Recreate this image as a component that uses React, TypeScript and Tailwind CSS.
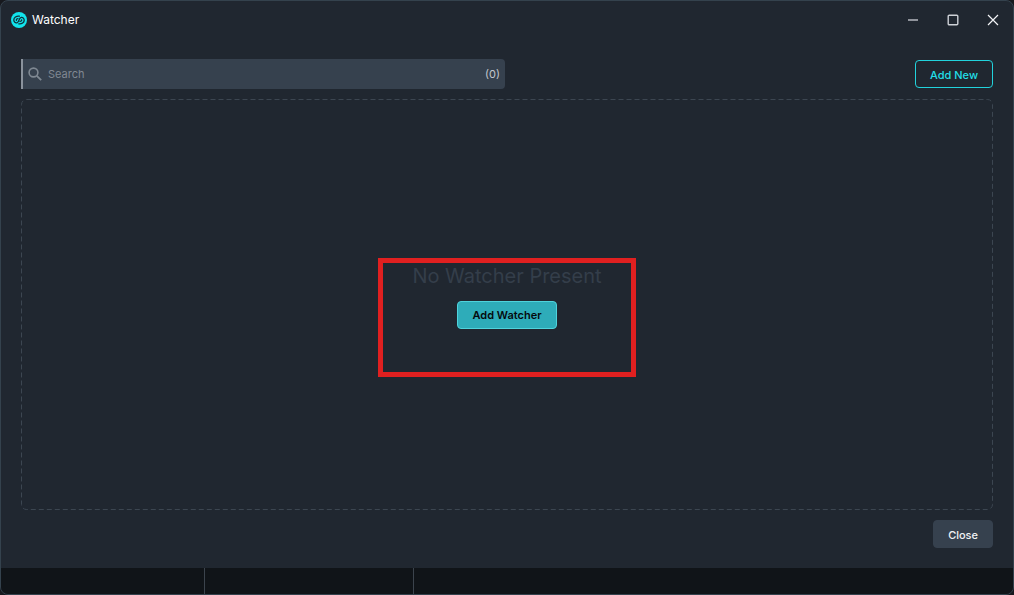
import { useState } from "react";

const STATUS_CELLS = ["w-[203px]", "w-52"];

function WatcherLogo() {
  return (
    <svg viewBox="0 0 16 16" className="size-4" aria-hidden="true">
      <circle cx="8" cy="8" r="8" fill="#12e4ec" />
      <g fill="none" stroke="#10303a" strokeWidth="1.3" strokeLinecap="round">
        <path d="M8.4 4.2C5.4 3.8 2.8 5.4 2.8 8C2.8 10 4.4 11.2 6 10.8C8.6 10.2 7.4 5.8 10.2 5.4C12 5.2 13.2 6.6 13.2 8.2C13.2 10.6 10.8 12.2 7.8 11.8" />
        <path d="M7 6.6C5.8 6.6 5.2 7.4 5.4 8.4M9 9.4C10.2 9.4 10.8 8.6 10.6 7.8" />
      </g>
    </svg>
  );
}

function TitleBar() {
  const controls = [
    { label: "Minimize", path: <path d="M1 6h10" stroke="#b4b9bf" strokeWidth="1.6" /> },
    {
      label: "Maximize",
      path: <rect x="1.2" y="1.2" width="9.6" height="9.6" rx="1" stroke="#cdd1d6" strokeWidth="1.4" />,
    },
    { label: "Exit", path: <path d="M1 1l10 10M11 1L1 11" stroke="#f3f4f6" strokeWidth="1.2" /> },
  ];

  return (
    <header className="flex h-[38px] items-center justify-between pl-2.5">
      <h1 className="flex items-center gap-[5px] text-xs text-white">
        <WatcherLogo />
        Watcher
      </h1>
      <div className="flex">
        {controls.map((control) => (
          <button
            key={control.label}
            aria-label={control.label}
            className="flex h-9 w-10 items-center justify-center hover:bg-white/10"
          >
            <svg viewBox="0 0 12 12" fill="none" className="size-3">
              {control.path}
            </svg>
          </button>
        ))}
      </div>
    </header>
  );
}

export default function App() {
  const [query, setQuery] = useState("");

  return (
    <div className="min-h-screen flex flex-col bg-[#17191e] font-['Inter',sans-serif]">
      <div className="flex grow flex-col overflow-hidden rounded-lg border border-[#34424d] bg-[#202730]">
        <TitleBar />

        <main className="flex grow flex-col px-5 py-5">
          <div className="flex items-center justify-between">
            <label className="flex h-[30px] w-1/2 max-w-[484px] items-center rounded-r border-l-2 border-[#8a929c] bg-[#36414e] px-[5px]">
              <svg viewBox="0 0 14 14" fill="none" stroke="#7f8892" className="mr-1.5 size-3.5" aria-hidden="true">
                <circle cx="5.5" cy="5.5" r="4.4" strokeWidth="1.6" />
                <path d="M8.8 8.8l4.4 4.4" strokeWidth="1.8" />
              </svg>
              <input
                type="text"
                aria-label="Search"
                placeholder="Search"
                value={query}
                onChange={(e) => setQuery(e.target.value)}
                className="min-w-0 grow bg-transparent text-[11px] text-white outline-none placeholder:text-[#808892]"
              />
              <span className="text-[11px] text-[#c3c7cd]">(0)</span>
            </label>
            <button className="h-7 rounded border border-[#22d3dc] px-3.5 pt-0.5 text-[11px] font-medium text-[#22dfe8]">
              Add New
            </button>
          </div>

          <section className="relative mt-2.5 flex grow flex-col items-center justify-center">
            {/* dashed outline */}
            <svg className="pointer-events-none absolute inset-0 size-full" aria-hidden="true">
              <rect
                x="0.5"
                y="0.5"
                rx="5"
                className="h-[calc(100%-1px)] w-[calc(100%-1px)]"
                fill="none"
                stroke="#3c4651"
                strokeDasharray="5 3"
              />
            </svg>
            <div className="relative flex flex-col items-center gap-2.5 px-8 pb-5">
              <p className="text-xl leading-[30px] text-[#343e4a]">No Watcher Present</p>
              <button className="h-7 rounded border border-[#4fd3dc] bg-[#2eacb9] px-3.5 pt-0.5 text-[11px] font-semibold text-[#05090d]">
                Add Watcher
              </button>
              {/* highlight frame */}
              <div className="pointer-events-none absolute -inset-x-0.5 -top-[3px] -bottom-7 border-5 border-[#e02020]" />
            </div>
          </section>

          <div className="mt-2.5 flex justify-end">
            <button className="h-7 rounded border border-[#36414e] bg-[#36414e] px-3.5 pt-0.5 text-[11px] font-medium text-[#f1f3f5]">
              Close
            </button>
          </div>
        </main>

        <footer className="flex h-[26px] bg-[#101418]">
          {STATUS_CELLS.map((width) => (
            <div key={width} className={`${width} box-content border-r border-[#3c444d]`} />
          ))}
        </footer>
      </div>
    </div>
  );
}
